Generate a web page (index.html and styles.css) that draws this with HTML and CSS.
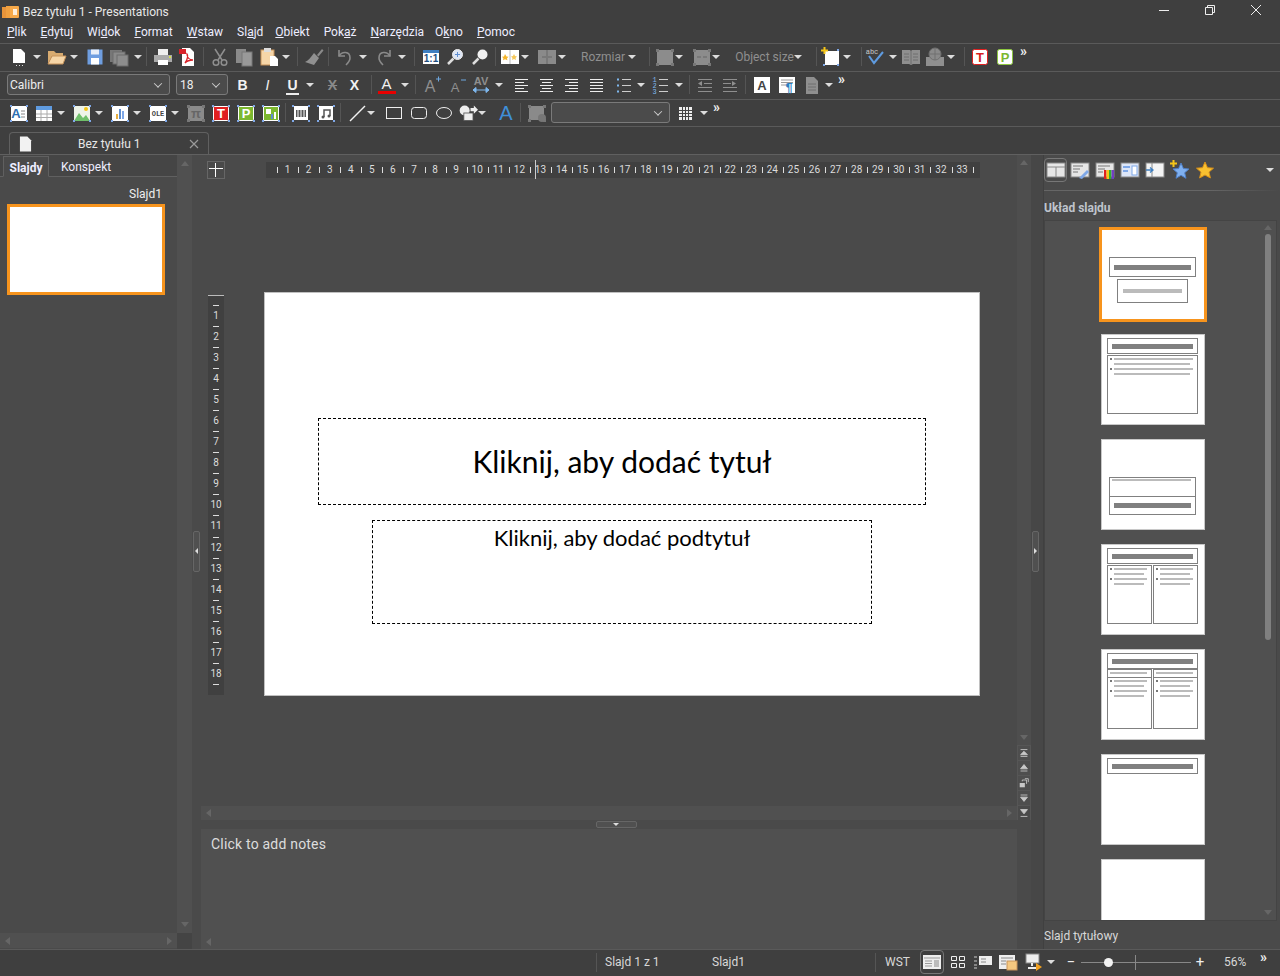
FILE: index.html
```html
<!DOCTYPE html>
<html lang="pl">
<head>
  <meta charset="UTF-8">
  <title>Bez tytułu 1 - Presentations</title>
  <link rel="stylesheet" href="styles.css">
</head>
<body>

<!-- wspolne ksztalty -->
<svg class="hide">
  <defs>
    <g id="dots" fill="#7fa8e8"><rect x="1" y="2" width="2" height="2"/><rect x="17" y="2" width="2" height="2"/><rect x="1" y="17" width="2" height="2"/><rect x="17" y="17" width="2" height="2"/></g>
    <g id="dark-dots" fill="#777"><rect x="1" y="2" width="3" height="3"/><rect x="16" y="2" width="3" height="3"/><rect x="1" y="16" width="3" height="3"/><rect x="16" y="16" width="3" height="3"/></g>
    <g id="ttl"><rect x="6.500" y="4.500" width="90" height="15" fill="none" stroke="#808080"/><rect x="11" y="10" width="81" height="5" fill="#808080"/></g>
    <g id="lines-a" fill="#bbb"><rect x="13" y="24" width="33" height="2"/><rect x="13" y="29" width="30" height="2"/><rect x="13" y="34" width="33" height="2"/><rect x="13" y="39" width="30" height="2"/><rect x="9" y="24" width="2" height="2" fill="#777"/><rect x="9" y="34" width="2" height="2" fill="#777"/></g>
  </defs>
</svg>

<div class="titlebar">
  <svg class="appicon" viewBox="0 0 17 14"><rect x="0" y="2" width="5" height="11" fill="#e8943a"/><rect x="4" y="1" width="5" height="12" fill="#f0a040"/><rect x="8" y="1" width="9" height="12" rx="1" fill="#f7a94a"/><rect x="11" y="4" width="4" height="6" fill="#fff" opacity=".8"/></svg>
  <span class="apptitle">Bez tytułu 1 - Presentations</span>
  <div class="winbtns">
    <svg viewBox="0 0 12 12"><path d="M1 6.500h10" stroke="#eee"/></svg>
    <svg viewBox="0 0 12 12"><path d="M1.500 3.500h7v7h-7zM3.500 3V1.500h7v7H9" fill="none" stroke="#eee"/></svg>
    <svg viewBox="0 0 12 12"><path d="M1 1l10 10M11 1L1 11" stroke="#eee"/></svg>
  </div>
</div>

<div class="menubar">
  <span><u>P</u>lik</span><span><u>E</u>dytuj</span><span>Wi<u>d</u>ok</span><span><u>F</u>ormat</span><span><u>W</u>staw</span><span>Sl<u>a</u>jd</span><span class="pull2"><u>O</u>biekt</span><span>Pok<u>a</u>ż</span><span><u>N</u>arzędzia</span><span class="pull3">O<u>k</u>no</span><span><u>P</u>omoc</span>
</div>

<!-- pasek 1 -->
<div class="toolbar">
  <span class="b"><svg viewBox="0 0 20 20"><path d="M4 2h8l4 4v10H4z" fill="#fff"/><path d="M7 18.500h1M10 18.500h1M13 18.500h1" stroke="#ddd"/></svg></span>
  <i class="at m4"></i>
  <span class="b m5"><svg viewBox="0 0 20 20"><path d="M1 4h6l2 2h7v3H5L1 17z" fill="#d8ab70"/><path d="M5 9h14l-3 8H1z" fill="#f6d6a8" stroke="#c8935a"/></svg></span>
  <i class="at m3"></i>
  <span class="b m6"><svg viewBox="0 0 20 20"><path d="M2.500 2.500h15v15h-15z" fill="#6f9ee0"/><rect x="6" y="2.500" width="8" height="5" fill="#e8eef8"/><rect x="6" y="11" width="8" height="6.500" fill="#fff"/></svg></span>
  <span class="b m3"><svg viewBox="0 0 20 20"><rect x="1" y="3" width="12" height="12" fill="#777"/><rect x="4" y="5" width="12" height="12" fill="#8a8a8a" stroke="#6c6c6c"/><rect x="8" y="8" width="11" height="11" fill="#8d8d8d" stroke="#6c6c6c"/></svg></span>
  <i class="at m5"></i>
  <i class="s m2"></i>
  <span class="b m2"><svg viewBox="0 0 20 20"><rect x="5" y="2" width="10" height="6" fill="#eee"/><path d="M1 8h18v7H1z" fill="#aaa"/><rect x="5" y="13" width="10" height="5" fill="#fff"/><rect x="16" y="9" width="2" height="2" fill="#d5e04a"/></svg></span>
  <span class="b m4"><svg viewBox="0 0 20 20"><path d="M4 1h8l4 4v14H4z" fill="#fff"/><path d="M1 2h7v5H1z" fill="#d8232a"/><path d="M7 16c3-4 3-8 2-9 0 3 2 6 6 6-4 0-6 1-8 3z" fill="none" stroke="#d8232a" stroke-width="1.300"/></svg></span>
  <i class="s m3"></i>
  <span class="b m2"><svg viewBox="0 0 20 20" fill="none" stroke="#8f8f8f" stroke-width="1.500"><path d="M5 2l7 11M15 2L8 13"/><circle cx="6" cy="15.500" r="2.800"/><circle cx="14" cy="15.500" r="2.800"/></svg></span>
  <span class="b m3"><svg viewBox="0 0 20 20"><rect x="2" y="2" width="10" height="14" fill="#8a8a8a"/><rect x="8" y="5" width="10" height="14" fill="#999" stroke="#777"/></svg></span>
  <span class="b m4"><svg viewBox="0 0 20 20"><rect x="2" y="3" width="13" height="15" fill="#f6d6a8" stroke="#c8935a"/><rect x="5" y="1" width="7" height="4" fill="#ddd"/><path d="M11 9h5l3 3v7h-8z" fill="#fff"/></svg></span>
  <i class="at m3"></i>
  <i class="s m5"></i>
  <span class="b m2"><svg viewBox="0 0 20 20"><path d="M13 8l5-6 1.500 1.500-5 6z" fill="#8a8a8a"/><path d="M10 6l5 5-5 7-9-3c3-1 6-5 9-9z" fill="#909090"/></svg></span>
  <i class="s m2"></i>
  <span class="b m2"><svg viewBox="0 0 20 20" fill="none" stroke="#8a8a8a" stroke-width="1.600"><path d="M4 3v6h6"/><path d="M4 9c3-5 11-5 11 2 0 3-2 5-4 7"/></svg></span>
  <i class="at m4"></i>
  <span class="b m6"><svg viewBox="0 0 20 20" fill="none" stroke="#8a8a8a" stroke-width="1.600"><path d="M16 3v6h-6"/><path d="M16 9c-3-5-11-5-11 2 0 3 2 5 4 7"/></svg></span>
  <i class="at m4"></i>
  <i class="s m6"></i>
  <span class="b m2"><svg viewBox="0 0 20 20"><rect x="2" y="3" width="16" height="14" fill="#fff"/><rect x="2" y="3" width="16" height="3" fill="#3f7fc0"/><text x="10" y="15" class="svt" fill="#1f4f80">1:1</text></svg></span>
  <span class="b m3"><svg viewBox="0 0 20 20"><circle cx="12.500" cy="7.500" r="5" fill="#dde6f5" stroke="#eee"/><path d="M10 7.500h5M12.500 5v5" stroke="#5f8ed0"/><path d="M8.500 11.500L3 17" stroke="#ddd" stroke-width="2.500"/></svg></span>
  <span class="b m4"><svg viewBox="0 0 20 20"><circle cx="12.500" cy="7.500" r="5" fill="#f2f2f2"/><path d="M8.500 11.500L3 17" stroke="#ddd" stroke-width="2.500"/></svg></span>
  <i class="s m3"></i>
  <span class="b"><svg viewBox="0 0 20 20"><rect x="1" y="3" width="18" height="14" fill="#fff"/><path d="M10 3v14" stroke="#bbb"/><path d="M5 7l1.500 2.500 2 .3-1.500 1.500.4 2L5 12.300 3 13.300l.4-2L2 9.800l2-.3z" fill="#f5b52a"/><path d="M14 7l1 2 2 .5-1.500 1.500.5 2-2-1-2 1 .5-2L11 9.500l2-.5z" fill="#f5c85a"/></svg></span>
  <i class="at m1"></i>
  <span class="b m7"><svg viewBox="0 0 20 20"><rect x="1" y="3" width="18" height="14" fill="#8a8a8a"/><path d="M10 3v14M5 10h4M15 10h-4" stroke="#666"/></svg></span>
  <i class="at m1"></i>
  <span class="lab m15">Rozmiar</span>
  <i class="at m3"></i>
  <i class="s m11"></i>
  <span class="b m1"><svg viewBox="0 0 20 20"><rect x="2" y="3" width="16" height="15" fill="#8c8c8c"/><use href="#dark-dots"/></svg></span>
  <i class="at"></i>
  <span class="b m8"><svg viewBox="0 0 20 20"><rect x="2" y="3" width="16" height="15" fill="#8c8c8c"/><use href="#dark-dots"/><path d="M5 10h4M15 10h-4" stroke="#666"/></svg></span>
  <i class="at"></i>
  <span class="lab m15">Object size</span>
  <i class="at"></i>
  <i class="s m12"></i>
  <span class="b m1"><svg viewBox="0 0 20 20"><rect x="4" y="4" width="14" height="14" fill="#fff"/><path d="M0 3.500h7M3.500 0v7" stroke="#f5c518" stroke-width="2"/><rect x="16" y="2" width="2" height="2" fill="#7fa8e8"/><rect x="16" y="17" width="2" height="2" fill="#7fa8e8"/><rect x="2" y="17" width="2" height="2" fill="#7fa8e8"/></svg></span>
  <i class="at m1"></i>
  <i class="s m8"></i>
  <span class="b"><svg viewBox="0 0 20 20"><text x="7" y="7" class="svs" fill="#ccc">abc</text><path d="M4 9l5 7 9-11" fill="none" stroke="#5f9be0" stroke-width="2"/></svg></span>
  <i class="at m3"></i>
  <span class="b m4"><svg viewBox="0 0 20 20"><path d="M1 3h8l1 1 1-1h8v14h-7l-2 1-2-1H1z" fill="#8f8f8f"/><path d="M10 4v13M3 7h5M3 10h5M3 13h5M12 7h5M12 10h5M12 13h5" stroke="#6e6e6e"/></svg></span>
  <span class="b m3"><svg viewBox="0 0 20 20"><path d="M1 10h5l4 2 4-2h5v9H1z" fill="#8f8f8f"/><circle cx="10" cy="7" r="6" fill="#8a8a8a" stroke="#707070"/><path d="M4 7h12M10 1v12" stroke="#707070"/></svg></span>
  <i class="at m1"></i>
  <i class="s m7"></i>
  <span class="b m2"><svg viewBox="0 0 20 20"><rect x="2.500" y="2.500" width="15" height="15" rx="2" fill="#fff" stroke="#e02020"/><text x="10" y="15" class="svb" fill="#d81e1e">T</text></svg></span>
  <span class="b m4"><svg viewBox="0 0 20 20"><rect x="2.500" y="2.500" width="15" height="15" rx="2" fill="#fff" stroke="#8cc63f"/><text x="10" y="15" class="svb" fill="#7cb82f">P</text></svg></span>
  <span class="more m4">»</span>
</div>

<!-- pasek 2 -->
<div class="toolbar">
  <div class="combo fontbox m-7">Calibri<i class="chev"></i></div>
  <div class="combo sizebox m6">18<i class="chev"></i></div>
  <span class="t m4"><b>B</b></span>
  <span class="t m4"><i>I</i></span>
  <span class="t m4"><b class="ul">U</b></span>
  <i class="at m3"></i>
  <span class="t m8 grey"><b class="st">X</b></span>
  <span class="t m1"><b>X</b></span>
  <i class="s m4"></i>
  <span class="t m1 fc"><b>A</b></span>
  <i class="at m4"></i>
  <i class="s m4"></i>
  <span class="b m2"><svg viewBox="0 0 20 20"><text x="8" y="17" class="svm" fill="#8f8f8f">A</text><path d="M14 4h5M16.500 1.500v5" stroke="#6fa8e0"/></svg></span>
  <span class="b m4"><svg viewBox="0 0 20 20"><text x="8" y="17" class="svn" fill="#8f8f8f">A</text><path d="M14 5h5" stroke="#6fa8e0"/></svg></span>
  <span class="b m3"><svg viewBox="0 0 20 20"><text x="10" y="10" class="svc" fill="#8f8f8f">AV</text><path d="M2 15h16M2 15l3-2.500v5zM18 15l-3-2.500v5z" fill="#7fb8ee" stroke="#7fb8ee"/></svg></span>
  <i class="at m4"></i>
  <span class="b m7"><svg viewBox="0 0 20 20"><path d="M4 4.500h13M4 7.500h9M4 10.500h13M4 13.500h9M4 16.500h13" stroke="#eee"/></svg></span>
  <span class="b m4"><svg viewBox="0 0 20 20"><path d="M4 4.500h13M6 7.500h9M4 10.500h13M6 13.500h9M4 16.500h13" stroke="#eee"/></svg></span>
  <span class="b m4"><svg viewBox="0 0 20 20"><path d="M4 4.500h13M8 7.500h9M4 10.500h13M8 13.500h9M4 16.500h13" stroke="#eee"/></svg></span>
  <span class="b m4"><svg viewBox="0 0 20 20"><path d="M4 4.500h13M4 7.500h13M4 10.500h13M4 13.500h13M4 16.500h13" stroke="#eee"/></svg></span>
  <span class="b m6"><svg viewBox="0 0 20 20"><path d="M9 4.500h9M9 10.500h9M9 16.500h9" stroke="#ccc"/><path d="M4 3.500h2v2H4zM4 9.500h2v2H4zM4 15.500h2v2H4z" fill="#7fb8ee"/></svg></span>
  <i class="at m4"></i>
  <span class="b m4"><svg viewBox="0 0 20 20"><path d="M9 4.500h9M9 10.500h9M9 16.500h9" stroke="#ccc"/><text x="4.500" y="7" class="svs" fill="#7fb8ee">1</text><text x="4.500" y="13" class="svs" fill="#7fb8ee">2</text><text x="4.500" y="19" class="svs" fill="#7fb8ee">3</text></svg></span>
  <i class="at m5"></i>
  <i class="s m4"></i>
  <span class="b m1"><svg viewBox="0 0 20 20"><path d="M3 4.500h14M9 8.500h8M3 12.500h14M3 16.500h14" stroke="#8f8f8f"/><path d="M3 8.500l4-2.500v5z" fill="#8f8f8f"/></svg></span>
  <span class="b m4"><svg viewBox="0 0 20 20"><path d="M3 4.500h14M3 8.500h8M3 12.500h14M3 16.500h14" stroke="#8f8f8f"/><path d="M12 6l4 2.500-4 2.500z" fill="#8f8f8f"/></svg></span>
  <i class="s m3"></i>
  <span class="b m2"><svg viewBox="0 0 20 20"><rect x="2" y="2" width="16" height="16" fill="#fff"/><text x="10" y="15" class="svb" fill="#444">A</text></svg></span>
  <span class="b m4"><svg viewBox="0 0 20 20"><rect x="2" y="2" width="16" height="16" fill="#fff"/><path d="M4 5h12M4 7.500h12M4 10h5" stroke="#999"/><text x="12" y="17" class="svb" fill="#2f7fc0">¶</text></svg></span>
  <span class="b m4"><svg viewBox="0 0 20 20"><path d="M4 2h8l4 4v13H4z" fill="#8f8f8f"/><path d="M6 9h8M6 12h8M6 15h8" stroke="#6e6e6e"/></svg></span>
  <i class="at m3"></i>
  <span class="more m5">»</span>
</div>

<!-- pasek 3 -->
<div class="toolbar">
  <span class="b"><svg viewBox="0 0 20 20"><rect x="2" y="3" width="16" height="15" fill="#fff"/><use href="#dots"/><text x="7" y="15" class="svb" fill="#2f6fb0">A</text><path d="M12 8h4M12 11h4M12 14h4" stroke="#888"/></svg></span>
  <span class="b m4"><svg viewBox="0 0 20 20"><rect x="2" y="3" width="16" height="15" fill="#fff"/><rect x="2" y="3" width="16" height="4" fill="#5f9be0"/><path d="M2 11h16M2 14.500h16M7 7v11M13 7v11" stroke="#aaa"/></svg></span>
  <i class="at m3"></i>
  <span class="b m6"><svg viewBox="0 0 20 20"><rect x="2" y="3" width="16" height="15" fill="#eef4e8"/><path d="M2 18l5-8 4 5 3-3 4 6z" fill="#6fbf6a"/><use href="#dots"/><circle cx="14" cy="6" r="2" fill="#f5c518"/></svg></span>
  <i class="at m3"></i>
  <span class="b m6"><svg viewBox="0 0 20 20"><rect x="2" y="3" width="16" height="15" fill="#fff"/><use href="#dots"/><rect x="6" y="11" width="2" height="5" fill="#e8b040"/><rect x="9" y="6" width="2" height="10" fill="#5f8ed0"/><rect x="12" y="8" width="2" height="8" fill="#7fa8e8"/></svg></span>
  <i class="at m3"></i>
  <span class="b m6"><svg viewBox="0 0 20 20"><rect x="2" y="3" width="16" height="15" fill="#fff"/><use href="#dots"/><text x="10" y="13" class="svo" fill="#444">OLE</text></svg></span>
  <i class="at m3"></i>
  <span class="b m6"><svg viewBox="0 0 20 20"><rect x="2" y="3" width="16" height="15" fill="#8a8a8a"/><use href="#dark-dots"/><text x="10" y="15" class="svb" fill="#666">π</text></svg></span>
  <span class="b m4"><svg viewBox="0 0 20 20"><rect x="2.500" y="3.500" width="15" height="14" rx="1" fill="#e02020" stroke="#fff"/><use href="#dots"/><text x="10" y="15" class="svb" fill="#fff">T</text></svg></span>
  <span class="b m4"><svg viewBox="0 0 20 20"><rect x="2.500" y="3.500" width="15" height="14" rx="1" fill="#7cb82f" stroke="#fff"/><use href="#dots"/><text x="10" y="15" class="svb" fill="#fff">P</text></svg></span>
  <span class="b m4"><svg viewBox="0 0 20 20"><rect x="2.500" y="3.500" width="15" height="14" fill="#7cb82f" stroke="#fff"/><use href="#dots"/><rect x="5" y="6" width="5" height="5" fill="#fff"/><rect x="10" y="11" width="2" height="5" fill="#5f8ed0"/><rect x="13" y="9" width="2" height="7" fill="#fff"/></svg></span>
  <i class="s m2"></i>
  <span class="b m1"><svg viewBox="0 0 20 20"><rect x="3" y="3" width="14" height="14" fill="#fff"/><use href="#dots"/><rect x="5" y="7" width="10" height="7" fill="#555"/><path d="M10 7v7M7 7v7M13 7v7" stroke="#fff"/></svg></span>
  <span class="b m4"><svg viewBox="0 0 20 20"><rect x="3" y="3" width="14" height="14" fill="#fff"/><use href="#dots"/><path d="M8 14V7h6v6" fill="none" stroke="#555" stroke-width="1.500"/><circle cx="7" cy="14" r="1.500" fill="#555"/><circle cx="13" cy="13" r="1.500" fill="#555"/></svg></span>
  <i class="s m2"></i>
  <span class="b m2"><svg viewBox="0 0 20 20"><path d="M3 18L18 3" stroke="#f2f2f2" stroke-width="1.500"/></svg></span>
  <i class="at"></i>
  <span class="b m8"><svg viewBox="0 0 20 20"><rect x="2.500" y="4.500" width="15" height="11" fill="none" stroke="#eee"/></svg></span>
  <span class="b m4"><svg viewBox="0 0 20 20"><rect x="2.500" y="4.500" width="15" height="11" rx="3" fill="none" stroke="#eee"/></svg></span>
  <span class="b m4"><svg viewBox="0 0 20 20"><ellipse cx="10" cy="10" rx="7.500" ry="5.500" fill="none" stroke="#eee"/></svg></span>
  <span class="b m3"><svg viewBox="0 0 24 24"><circle cx="8" cy="9" r="6" fill="#eee"/><rect x="7" y="12" width="11" height="9" fill="#eee" stroke="#555"/><path d="M15 6h4V3l5 5-5 5v-3h-4z" fill="#eee"/></svg></span>
  <i class="at"></i>
  <span class="b m9"><svg viewBox="0 0 20 20"><text x="10" y="17" class="svx" fill="#3f8fd8">A</text></svg></span>
  <i class="s m2"></i>
  <span class="b m2"><svg viewBox="0 0 20 20"><rect x="2" y="3" width="15" height="14" fill="#8a8a8a"/><use href="#dark-dots"/><circle cx="15" cy="15" r="4" fill="#777"/></svg></span>
  <div class="combo stylebox m4"><i class="chev"></i></div>
  <span class="b m5"><svg viewBox="0 0 20 20"><rect x="3" y="4" width="13" height="13" fill="#eee"/><path d="M6.500 4v13M9.500 4v13M12.500 4v13M3 7.500h13M3 10.500h13M3 13.500h13" stroke="#444"/></svg></span>
  <i class="at m4"></i>
  <span class="more m5">»</span>
</div>

<div class="tabrow">
  <div class="doctab">
    <svg viewBox="0 0 14 16"><path d="M1 0h8l4 4v12H1z" fill="#f2f2f2"/></svg>
    <span class="docname">Bez tytułu 1</span>
    <svg class="tabx" viewBox="0 0 10 10"><path d="M1 1l8 8M9 1L1 9" stroke="#9a9a9a" stroke-width="1.200"/></svg>
  </div>
</div>

<div class="main">
  <!-- lewy panel -->
  <div class="left">
    <div class="lefttabs">
      <span class="ltab on">Slajdy</span><span class="ltab">Konspekt</span>
    </div>
    <div class="leftbody">
      <div class="slidelist">
        <div class="thumbname">Slajd1</div>
        <div class="thumb"></div>
      </div>
      <div class="vbar"><i class="tu"></i><i class="td"></i></div>
    </div>
    <div class="leftfoot">
      <div class="hbar"><i class="tl"></i><i class="tr"></i></div>
      <div class="corner"></div>
    </div>
  </div>

  <div class="splitbar"><div class="handle"><i class="hl"></i></div></div>

  <div class="center">
    <div class="work">
      <div class="canvas">
        <div class="toprow">
          <div class="rulercorner"><i></i></div>
          <div class="hruler">
            <span>1</span><span>2</span><span>3</span><span>4</span><span>5</span><span>6</span><span>7</span><span>8</span><span>9</span><span>10</span><span>11</span><span>12</span><span>13</span><span>14</span><span>15</span><span>16</span><span>17</span><span>18</span><span>19</span><span>20</span><span>21</span><span>22</span><span>23</span><span>24</span><span>25</span><span>26</span><span>27</span><span>28</span><span>29</span><span>30</span><span>31</span><span>32</span><span>33</span><span class="last"></span>
            <i class="marker"></i>
          </div>
        </div>
        <div class="pagerow">
          <div class="vruler">
            <span>1</span><span>2</span><span>3</span><span>4</span><span>5</span><span>6</span><span>7</span><span>8</span><span>9</span><span>10</span><span>11</span><span>12</span><span>13</span><span>14</span><span>15</span><span>16</span><span>17</span><span>18</span><span class="last"></span>
          </div>
          <div class="slide">
            <div class="ph title">Kliknij, aby dodać tytuł</div>
            <div class="ph subtitle">Kliknij, aby dodać podtytuł</div>
          </div>
        </div>
      </div>
      <div class="workscroll">
        <i class="tu"></i>
        <i class="td"></i>
        <div class="navbtns">
          <span><svg viewBox="0 0 14 14"><path d="M3 3h8M7 5l4 4H3zM3 11h8" stroke="#c8c8c8" fill="#c8c8c8"/></svg></span>
          <span><svg viewBox="0 0 14 14"><path d="M7 3l4 5H3zM3 10.500h8" stroke="#c8c8c8" fill="#c8c8c8"/></svg></span>
          <span><svg viewBox="0 0 14 14"><rect x="2" y="7" width="6" height="5" fill="#c8c8c8"/><path d="M5 5V3.500h5V8M8 2h4v4" stroke="#c8c8c8" fill="none"/></svg></span>
          <span><svg viewBox="0 0 14 14"><path d="M3 3.500h8M3 6h8l-4 5z" stroke="#c8c8c8" fill="#c8c8c8"/></svg></span>
          <span><svg viewBox="0 0 14 14"><path d="M3 3h8L7 8zM3 11h8" stroke="#c8c8c8" fill="#c8c8c8"/></svg></span>
        </div>
      </div>
    </div>
    <div class="workfoot"><div class="hbar"><i class="tl"></i><i class="tr"></i></div></div>
    <div class="notesplit"><div class="notehandle"><i></i></div></div>
    <div class="notes">
      <div class="notetext">Click to add notes</div>
      <div class="hbar notebar"><i class="tl"></i></div>
    </div>
  </div>

  <div class="splitbar right"><div class="handle"><i class="hr"></i></div></div>

  <!-- prawy panel -->
  <div class="deck">
    <div class="deckicons">
      <span class="di on"><svg viewBox="0 0 20 20"><rect x="1" y="3" width="18" height="14" fill="#e6e6e6" stroke="#888"/><path d="M1 7h18M10 7v10" stroke="#888"/></svg></span>
      <span class="di"><svg viewBox="0 0 20 20"><rect x="1" y="3" width="18" height="14" fill="#e6e6e6" stroke="#888"/><path d="M3 6h10M3 9h7M3 12h5" stroke="#777"/><path d="M9 18l8-8 2 2-7 7z" fill="#7fa8e8"/></svg></span>
      <span class="di"><svg viewBox="0 0 20 20"><rect x="1" y="3" width="18" height="14" fill="#e6e6e6" stroke="#888"/><path d="M3 6h12M3 9h7M3 12h5" stroke="#777"/><rect x="9" y="10" width="2.500" height="9" fill="#e02020"/><rect x="11.500" y="10" width="2.500" height="9" fill="#f5c518"/><rect x="14" y="10" width="2.500" height="9" fill="#30b030"/><rect x="16.500" y="10" width="2.500" height="9" fill="#7040c0"/></svg></span>
      <span class="di"><svg viewBox="0 0 20 20"><rect x="1" y="3" width="18" height="14" fill="#dde6f8" stroke="#888"/><rect x="3" y="6" width="7" height="2" fill="#7fa8e8"/><rect x="3" y="10" width="5" height="2" fill="#7fa8e8"/><rect x="12" y="6" width="5" height="9" fill="#fff" stroke="#7fa8e8"/></svg></span>
      <span class="di"><svg viewBox="0 0 20 20"><rect x="1" y="3" width="18" height="14" fill="#f4f4f4" stroke="#888"/><path d="M7 3v14" stroke="#888"/><path d="M1 10h6M5 7.500L8 10l-3 2.500" stroke="#3f7fc0" fill="none" stroke-width="1.300"/></svg></span>
      <span class="di"><svg viewBox="0 0 20 20"><path d="M11 3l2.400 5.500 5.600.5-4.300 3.700 1.300 5.600-5-3-5 3 1.300-5.600L3 9l5.600-.5z" fill="#7fb0f0" stroke="#4f80c8"/><path d="M0 3.500h7M3.500 0v7" stroke="#f5c518" stroke-width="2"/></svg></span>
      <span class="di"><svg viewBox="0 0 20 20"><path d="M10 2l2.500 5.700 6 .5-4.500 3.900 1.400 5.900L10 15l-5.400 3 1.400-5.900-4.500-3.900 6-.5z" fill="#f8c030" stroke="#d89018"/></svg></span>
      <i class="at deckarrow"></i>
    </div>
    <div class="deckline"></div>
    <div class="decktitle">Układ slajdu</div>
    <div class="layoutbox">
      <div class="layoutlist">
        <div class="th sel"><svg viewBox="1 1 102 89"><rect x="8.500" y="28.500" width="86" height="19" fill="none" stroke="#808080"/><rect x="13" y="36" width="77" height="5" fill="#808080"/><rect x="16.500" y="50.500" width="70" height="23" fill="none" stroke="#808080"/><rect x="22" y="60" width="59" height="4" fill="#bbb"/></svg></div>
        <div class="th"><svg viewBox="1 1 102 89"><use href="#ttl"/><rect x="6.500" y="21.500" width="90" height="58" fill="none" stroke="#808080"/><path d="M13 25h79M13 30h76M13 35h79M13 40h76" stroke="#bbb" stroke-width="2"/><path d="M9 25h2M9 35h2" stroke="#777" stroke-width="2"/></svg></div>
        <div class="th"><svg viewBox="1 1 102 89"><rect x="8.500" y="38.500" width="86" height="37" fill="none" stroke="#808080"/><path d="M8.500 57.500h86" stroke="#808080"/><rect x="11" y="40" width="79" height="2" fill="#bbb"/><rect x="13" y="64" width="77" height="5" fill="#808080"/></svg></div>
        <div class="th"><svg viewBox="1 1 102 89"><use href="#ttl"/><rect x="6.500" y="21.500" width="44" height="58" fill="none" stroke="#808080"/><rect x="52.500" y="21.500" width="44" height="58" fill="none" stroke="#808080"/><use href="#lines-a"/><use href="#lines-a" x="46"/></svg></div>
        <div class="th"><svg viewBox="1 1 102 89"><use href="#ttl"/><rect x="6.500" y="20.500" width="44" height="59" fill="none" stroke="#808080"/><rect x="52.500" y="20.500" width="44" height="59" fill="none" stroke="#808080"/><path d="M6.500 28.500h44M52.500 28.500h44" stroke="#808080"/><rect x="9" y="23" width="37" height="2" fill="#bbb"/><rect x="55" y="23" width="37" height="2" fill="#bbb"/><use href="#lines-a" y="7"/><use href="#lines-a" x="46" y="7"/></svg></div>
        <div class="th"><svg viewBox="1 1 102 89"><use href="#ttl"/></svg></div>
        <div class="th"></div>
      </div>
      <div class="layoutscroll"><i class="tu"></i><div class="scrollthumb"></div><i class="td"></i></div>
    </div>
    <div class="deckfoot">Slajd tytułowy</div>
  </div>
</div>

<div class="status">
  <i class="s sm1"></i>
  <span class="st1">Slajd 1 z 1</span>
  <span class="st2">Slajd1</span>
  <i class="s sm2"></i>
  <span class="st3">WST</span>
  <span class="sb on"><svg viewBox="0 0 20 20"><rect x="1" y="3" width="18" height="14" fill="#eee"/><path d="M2 6h16" stroke="#999"/><path d="M3 9h7M3 11.500h7M3 14h7" stroke="#999"/><rect x="12" y="8" width="5" height="7" fill="#bbb"/></svg></span>
  <span class="sb"><svg viewBox="0 0 20 20"><path d="M3.500 4.500h5v4h-5zM11.500 4.500h5v4h-5zM3.500 11.500h5v4h-5zM11.500 11.500h5v4h-5z" fill="none" stroke="#eee"/></svg></span>
  <span class="sb"><svg viewBox="0 0 20 20"><path d="M1 5h3M1 9h3M1 13h3M1 16h3" stroke="#ccc"/><rect x="6" y="4" width="13" height="9" fill="#eee"/><path d="M8 7h5M8 10h5" stroke="#888"/></svg></span>
  <span class="sb"><svg viewBox="0 0 20 20"><rect x="1" y="3" width="16" height="14" fill="#eee"/><path d="M3 6h12M3 9h5M3 12h5" stroke="#888"/><rect x="9" y="9" width="10" height="9" fill="#f5c880" stroke="#c8935a"/></svg></span>
  <span class="sb"><svg viewBox="0 0 20 20"><rect x="3" y="2" width="13" height="9" fill="#eee" stroke="#888"/><path d="M9 11v3M5 16h8" stroke="#eee" stroke-width="2"/><path d="M13 11l6 4-6 4z" fill="#f0a020"/></svg></span>
  <i class="at starrow"></i>
  <span class="zoomsym">−</span>
  <div class="slider"><i class="knob"></i><i class="mid"></i></div>
  <span class="zoomsym plus">+</span>
  <span class="st4">56%</span>
  <span class="more stmore">»</span>
</div>

</body>
</html>
```

FILE: styles.css
```css
* {
  box-sizing: border-box;
}

html, body {
  height: 100%;
}

body {
  margin: 0;
  height: 976px;
  overflow: hidden;
  display: flex;
  flex-direction: column;
  background: #3f3f3f;
  color: #e8e8e8;
  font-family: Roboto, "Liberation Sans", sans-serif;
  font-size: 12px;
}

.hide {
  position: absolute;
  width: 0;
  height: 0;
}

.titlebar {
  height: 22px;
  display: flex;
  align-items: center;
  padding: 1px 0 0 2px;
}

.appicon {
  width: 17px;
  height: 14px;
}

.apptitle {
  margin-left: 4px;
}

.winbtns {
  margin-left: auto;
  display: flex;
  padding-right: 18px;
  gap: 34px;
  margin-top: -3px;
}

.winbtns svg {
  width: 12px;
  height: 12px;
}

.menubar {
  height: 22px;
  display: flex;
  align-items: center;
  padding: 0 0 2px 7px;
  gap: 14px;
  border-bottom: 1px solid #5a5a5a;
  font-size: 12px;
  color: #eef;
}

.pull2 { margin-left: -2px; }
.pull3 { margin-left: -3px; }

.toolbar {
  height: 28px;
  display: flex;
  align-items: center;
  padding: 0 0 2px 8px;
  border-bottom: 1px solid #5a5a5a;
  flex: none;
}

.toolbar:nth-of-type(5) {
  height: 27px;
  padding-bottom: 1px;
}

.b {
  width: 21px;
  height: 22px;
  flex: none;
  display: flex;
  align-items: center;
  justify-content: center;
}

.b svg {
  width: 20px;
  height: 20px;
}

.t {
  width: 21px;
  flex: none;
  text-align: center;
  font-size: 14px;
  font-family: "Liberation Sans", sans-serif;
  color: #f2f2f2;
}

.t.grey {
  color: #8a8a8a;
}

.ul {
  border-bottom: 2px solid #eee;
  padding: 0 1px;
}

.st {
  text-decoration: line-through;
}

.fc b {
  display: inline-block;
  width: 18px;
  font-weight: normal;
  font-size: 15px;
  line-height: 15px;
  border-bottom: 3px solid #e80000;
}

.at {
  width: 8px;
  height: 4px;
  flex: none;
  border-left: 4px solid transparent;
  border-right: 4px solid transparent;
  border-top: 4px solid #ddd;
}

.s {
  width: 1px;
  height: 19px;
  flex: none;
  margin-right: 2px;
  margin-left: 2px;
  background: #555;
}

/* odstepy w paskach */
.m1 { margin-left: 1px; }
.m2 { margin-left: 2px; }
.m3 { margin-left: 3px; }
.m4 { margin-left: 4px; }
.m5 { margin-left: 5px; }
.m6 { margin-left: 6px; }
.m7 { margin-left: 7px; }
.m8 { margin-left: 8px; }
.m9 { margin-left: 9px; }
.m11 { margin-left: 11px; }
.m12 { margin-left: 12px; }
.m15 { margin-left: 15px; }
.m-7 { margin-left: -1px; }

.s.m2 { margin-left: 4px; margin-right: 3px; }
.s.m3 { margin-left: 5px; margin-right: 3px; }
.s.m4 { margin-left: 6px; margin-right: 3px; }
.s.m5 { margin-left: 7px; margin-right: 3px; }
.s.m6 { margin-left: 8px; margin-right: 3px; }
.s.m7 { margin-left: 9px; margin-right: 3px; }
.s.m8 { margin-left: 10px; margin-right: 3px; }
.s.m11 { margin-left: 13px; margin-right: 3px; }
.s.m12 { margin-left: 14px; margin-right: 3px; }

.lab {
  color: #8f8f8f;
  font-size: 12px;
  flex: none;
}

.more {
  align-self: flex-start;
  width: 8px;
  font-size: 14px;
  line-height: 14px;
  color: #f0f0f0;
  font-weight: bold;
  flex: none;
}

.combo {
  height: 21px;
  flex: none;
  display: flex;
  align-items: center;
  padding-left: 2px;
  background: #4b4b4b;
  border: 1px solid #7a7a7a;
  border-radius: 3px;
  color: #eee;
  font-size: 12px;
  position: relative;
}

.fontbox { width: 163px; }
.sizebox { width: 52px; padding-left: 3px; }
.stylebox { width: 119px; }

.chev {
  margin-left: auto;
  margin-right: 8px;
  width: 6px;
  height: 6px;
  border-right: 1px solid #ccc;
  border-bottom: 1px solid #ccc;
  transform: rotate(45deg) translate(-1px, -1px);
}

.svt { font: bold 10px "Liberation Sans", sans-serif; text-anchor: middle; }
.svs { font: 7px "Liberation Mono", monospace; text-anchor: middle; }
.svb { font: bold 13px "Liberation Sans", sans-serif; text-anchor: middle; }
.svc { font: bold 11px "Liberation Sans", sans-serif; text-anchor: middle; }
.svx { font: 20px "Liberation Sans", sans-serif; text-anchor: middle; }
.svm { font: 16px "Liberation Sans", sans-serif; text-anchor: middle; }
.svn { font: 13px "Liberation Sans", sans-serif; text-anchor: middle; }
.svo { font: bold 7px "Liberation Mono", monospace; text-anchor: middle; }

.tabrow {
  height: 28px;
  flex: none;
  padding: 5px 0 0 9px;
  border-bottom: 1px solid #606060;
}

.doctab {
  width: 200px;
  height: 23px;
  display: flex;
  align-items: center;
  padding-left: 9px;
  border: 1px solid #606060;
  border-bottom: none;
  border-radius: 4px 4px 0 0;
}

.doctab svg {
  width: 13px;
  height: 16px;
}

.docname {
  margin-left: 46px;
  width: 75px;
  color: #e6e6e6;
}

.doctab svg.tabx {
  width: 10px;
  height: 10px;
  margin-left: 36px;
}

.main {
  height: 794px;
  display: flex;
  flex: none;
  background: #4a4a4a;
}

.left {
  width: 193px;
  flex: none;
  display: flex;
  flex-direction: column;
}

.lefttabs {
  height: 22px;
  display: flex;
  align-items: flex-end;
  padding-left: 3px;
  background: #454545;
  border-bottom: 1px solid #606060;
  width: 178px;
}

.ltab {
  height: 20px;
  padding: 4px 11px 0;
  color: #eef;
}

.ltab.on {
  width: 46px;
  padding: 4px 0 0;
  text-align: center;
  font-weight: bold;
  border: 1px solid #606060;
  border-bottom: 1px solid #4a4a4a;
  background: #4a4a4a;
  height: 21px;
  margin-bottom: -1px;
  margin-right: 1px;
}

.leftbody {
  flex: 1;
  display: flex;
  margin-top: -22px;
}

.slidelist {
  width: 177px;
  flex: none;
  padding: 31px 0 0 7px;
}

.thumbname {
  width: 155px;
  text-align: right;
  color: #eee;
  line-height: 16px;
  height: 18px;
}

.thumb {
  width: 158px;
  height: 91px;
  background: #fff;
  border: 3px solid #f7941d;
}

.vbar {
  width: 15px;
  flex: none;
  background: #505050;
  display: flex;
  flex-direction: column;
  align-items: center;
  justify-content: space-between;
  padding: 6px 0 6px;
}

.leftfoot {
  height: 16px;
  display: flex;
  flex: none;
}

.leftfoot .hbar {
  width: 177px;
}

.corner {
  width: 15px;
  background: #444;
}

.hbar {
  height: 15px;
  background: #505050;
  display: flex;
  align-items: center;
  justify-content: space-between;
  padding: 0 5px;
}

.tu, .td, .tl, .tr {
  display: block;
  width: 0;
  height: 0;
  flex: none;
  border: 4px solid transparent;
}

.tu { border-bottom-color: #666; border-top-width: 0; border-bottom-width: 5px; }
.td { border-top-color: #666; border-bottom-width: 0; border-top-width: 5px; }
.tl { border-right-color: #666; border-left-width: 0; border-right-width: 5px; }
.tr { border-left-color: #666; border-right-width: 0; border-left-width: 5px; }

.splitbar {
  width: 8px;
  flex: none;
  display: flex;
  align-items: center;
}

.splitbar.right {
  width: 12px;
  background: #474747;
}

.handle {
  width: 7px;
  height: 41px;
  margin-top: -2px;
  border: 1px solid #666;
  border-radius: 2px;
  background: #505050;
  display: flex;
  align-items: center;
  justify-content: center;
}

.right .handle {
  margin-left: 1px;
}

.hl, .hr {
  width: 0;
  height: 0;
  border-top: 3px solid transparent;
  border-bottom: 3px solid transparent;
}

.hl { border-right: 3px solid #ddd; }
.hr { border-left: 3px solid #ddd; }

.center {
  width: 830px;
  flex: none;
  display: flex;
  flex-direction: column;
}

.work {
  height: 651px;
  flex: none;
  display: flex;
}

.canvas {
  width: 816px;
  flex: none;
  padding: 6px 0 0 6px;
}

.toprow {
  display: flex;
  height: 18px;
}

.rulercorner {
  width: 18px;
  height: 18px;
  border: 1px solid #666;
}

.rulercorner i {
  display: block;
  width: 14px;
  height: 14px;
  margin: 1px;
  background:
    linear-gradient(#fff, #fff) center 5px / 14px 1px no-repeat,
    linear-gradient(#fff, #fff) 6px center / 1px 14px no-repeat;
}

.hruler {
  margin-left: 41px;
  width: 714px;
  height: 16px;
  margin-top: 1px;
  background: #404040;
  padding-left: 11px;
  display: flex;
  position: relative;
}

.hruler span {
  flex: 0 0 21.090px;
  text-align: center;
  font-size: 10px;
  line-height: 16px;
  color: #ddd;
  background: linear-gradient(#ddd, #ddd) left center / 1px 6px no-repeat;
}

.marker {
  position: absolute;
  left: 269px;
  top: -2px;
  width: 1px;
  height: 19px;
  background: #ccc;
}

.pagerow {
  display: flex;
  margin-top: 113px;
}

.vruler {
  width: 16px;
  height: 400px;
  margin: 3px 0 0 1px;
  background: #404040;
  border-top: 1px solid #bbb;
  padding-top: 9px;
  flex: none;
}

.vruler span {
  display: block;
  height: 21.060px;
  text-align: center;
  font-size: 10px;
  line-height: 22px;
  color: #ddd;
  background: linear-gradient(#ddd, #ddd) center top / 6px 1px no-repeat;
}

.slide {
  width: 716px;
  height: 404px;
  margin-left: 40px;
  flex: none;
  background: #fff;
  border: 1px solid #c0c0c0;
  color: #000;
  font-family: Lato, "Liberation Sans", sans-serif;
  padding-top: 125px;
}

.ph {
  border: 1px dashed #000;
  text-align: center;
}

.title {
  width: 608px;
  height: 87px;
  margin-left: 53px;
  font-size: 30px;
  line-height: 84px;
}

.subtitle {
  width: 500px;
  height: 104px;
  margin: 15px 0 0 107px;
  font-size: 22px;
  line-height: 33px;
}

.workscroll {
  width: 14px;
  flex: none;
  background: #4e4e4e;
  display: flex;
  flex-direction: column;
  align-items: center;
  padding-top: 5px;
}

.workscroll .td {
  margin-top: auto;
  margin-bottom: 5px;
}

.navbtns {
  margin-bottom: -14px;
  width: 14px;
  flex: none;
}

.navbtns span {
  display: flex;
  align-items: center;
  justify-content: center;
  height: 15px;
  border: 1px solid #565656;
  border-bottom: none;
}

.navbtns svg {
  display: block;
  width: 12px;
  height: 12px;
}

.workfoot {
  height: 14px;
  flex: none;
}

.workfoot .hbar {
  height: 14px;
  width: 816px;
}

.notesplit {
  height: 9px;
  flex: none;
  display: flex;
  justify-content: center;
}

.notehandle {
  width: 41px;
  height: 7px;
  margin-top: 1px;
  border: 1px solid #666;
  border-radius: 2px;
  background: #505050;
  display: flex;
  align-items: center;
  justify-content: center;
}

.notehandle i {
  border-left: 3px solid transparent;
  border-right: 3px solid transparent;
  border-top: 3px solid #ddd;
}

.notes {
  width: 816px;
  height: 120px;
  flex: none;
  background: #505050;
  display: flex;
  flex-direction: column;
}

.notetext {
  flex: 1;
  padding: 7px 10px;
  font-size: 14px;
  line-height: 16px;
  letter-spacing: .2px;
  color: #ddd;
}

.deck {
  width: 237px;
  flex: none;
  border-left: 1px solid #404040;
  display: flex;
  flex-direction: column;
}

.deckicons {
  height: 33px;
  display: flex;
  align-items: center;
  padding-bottom: 3px;
}

.di {
  width: 25px;
  height: 24px;
  display: flex;
  align-items: center;
  justify-content: center;
  flex: none;
}

.di.on {
  width: 23px;
  border: 1px solid #777;
  border-radius: 4px;
}

.di svg {
  width: 20px;
  height: 20px;
}

.deckarrow {
  margin-left: auto;
  margin-right: 6px;
}

.deckline {
  height: 1px;
  margin-top: 2px;
  background: linear-gradient(90deg, #666 70%, #4a4a4a);
  flex: none;
}

.decktitle {
  height: 29px;
  padding-top: 10px;
  font-weight: bold;
  color: #bfc4cc;
  line-height: 14px;
  flex: none;
}

.layoutbox {
  width: 233px;
  height: 701px;
  flex: none;
  display: flex;
  background: #505050;
  border: 1px solid #444;
  overflow: hidden;
}

.layoutlist {
  width: 218px;
  flex: none;
  padding: 8px 0 0 56px;
}

.th {
  width: 104px;
  height: 91px;
  margin-bottom: 14px;
  background: #fff;
  border: 1px solid #c8c8c8;
}

.th svg {
  display: block;
  width: 102px;
  height: 89px;
}

.th.sel {
  border-color: #f7941d;
  outline: 2px solid #f7941d;
}

.layoutscroll {
  width: 10px;
  flex: none;
  display: flex;
  flex-direction: column;
  align-items: center;
  padding: 4px 0 5px;
}

.scrollthumb {
  width: 6px;
  height: 406px;
  margin-top: 4px;
  background: #808080;
  border-radius: 3px;
  margin-bottom: auto;
}

.deckfoot {
  flex: 1;
  padding-top: 8px;
  color: #d8d8d8;
}

.status {
  height: 27px;
  flex: none;
  display: flex;
  align-items: center;
  padding-bottom: 2px;
  border-top: 1px solid #5a5a5a;
  color: #d8d8d8;
}

.sm1 { margin-left: 596px; }
.st1 { margin-left: 6px; width: 107px; }
.st2 { width: 157px; }
.sm2 { margin-left: 6px; }
.st3 { margin-left: 7px; width: 35px; }

.sb {
  width: 25px;
  height: 24px;
  flex: none;
  display: flex;
  align-items: center;
  justify-content: center;
}

.sb.on {
  border: 1px solid #777;
  border-radius: 4px;
  width: 24px;
  margin-right: 1px;
}

.sb svg {
  width: 20px;
  height: 20px;
}

.starrow {
  margin-left: 2px;
}

.zoomsym {
  margin-left: 11px;
  width: 10px;
  font-size: 15px;
  text-align: center;
  color: #eee;
}

.slider {
  width: 110px;
  height: 1px;
  margin-left: 5px;
  background: #888;
  position: relative;
}

.knob {
  position: absolute;
  left: 23px;
  top: -4px;
  width: 9px;
  height: 9px;
  border-radius: 50%;
  background: #f2f2f2;
}

.mid {
  position: absolute;
  left: 54px;
  top: -7px;
  width: 1px;
  height: 15px;
  background: #888;
}

.zoomsym.plus {
  margin-left: 4px;
}

.st4 {
  margin-left: 19px;
  width: 28px;
}

.stmore {
  margin-left: 8px;
}
```
